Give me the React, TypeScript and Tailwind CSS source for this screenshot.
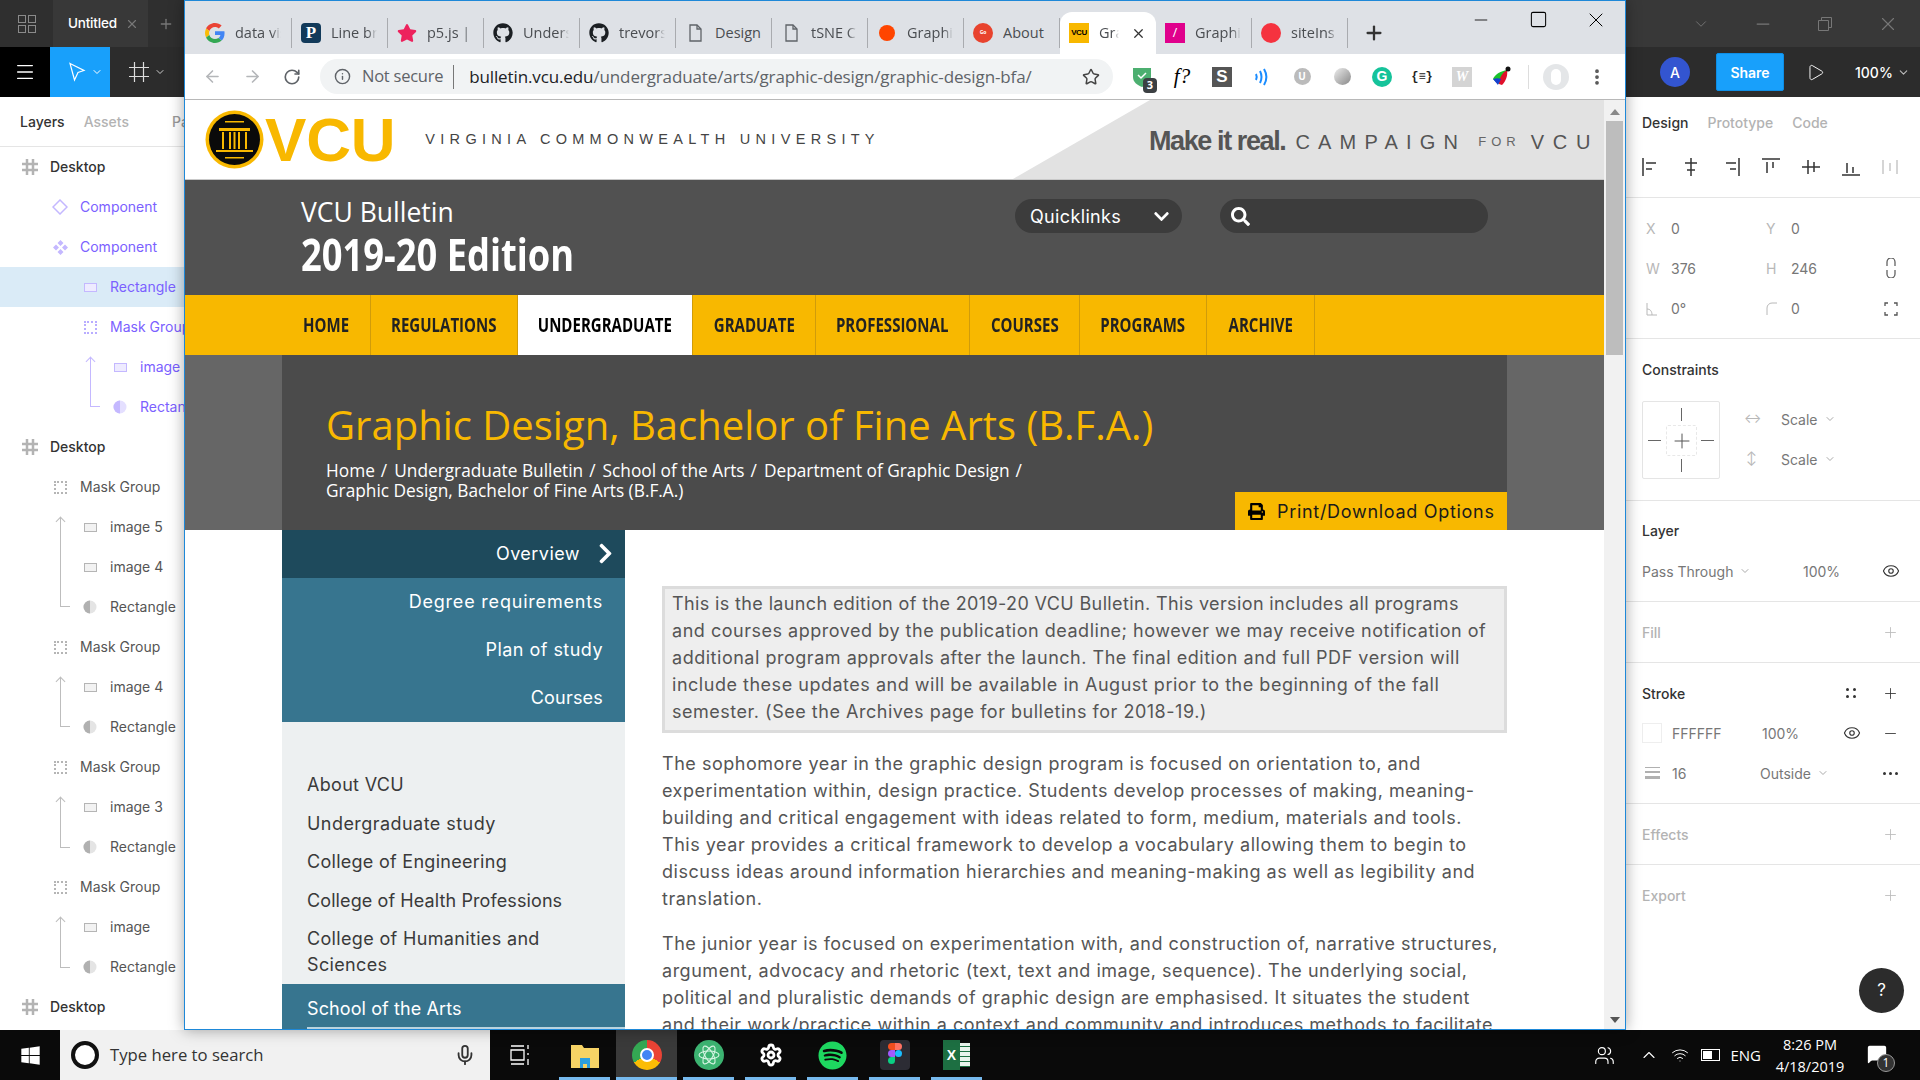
import { FaGithub, FaPrint, FaSearch, FaChevronDown, FaChevronRight, FaSpotify, FaWindows, FaStar } from "react-icons/fa";
import { ArrowLeft, ArrowRight, RotateCw, Info, Star, MoreVertical, Plus, X, Minus, Square, ChevronDown, Play, Menu, Mic, Eye, Settings, Wifi, ChevronUp, Users, MessageSquare } from "lucide-react";

const ui = "font-['Inter',sans-serif]";
const site = "font-['Inter',sans-serif]";
const open = "font-['Open_Sans',sans-serif]";

function GoogleG() {
  return (
    <svg width="20" height="20" viewBox="0 0 48 48">
      <path fill="#EA4335" d="M24 9.5c3.5 0 6.700 1.300 9.100 3.500l6.800-6.800C35.800 2.400 30.300 0 24 0 14.600 0 6.500 5.400 2.600 13.200l7.900 6.200C12.400 13.600 17.700 9.500 24 9.500z" />
      <path fill="#4285F4" d="M46.900 24.500c0-1.600-.1-3.100-.4-4.500H24v9h12.900c-.6 3-2.200 5.500-4.700 7.200l7.700 6c4.500-4.200 7-10.300 7-17.700z" />
      <path fill="#FBBC05" d="M10.500 28.600c-.5-1.400-.8-3-.8-4.600s.3-3.200.8-4.600l-7.900-6.200C.9 16.500 0 20.100 0 24s.9 7.500 2.600 10.800l7.900-6.200z" />
      <path fill="#34A853" d="M24 48c6.500 0 11.900-2.100 15.900-5.800l-7.700-6c-2.200 1.400-4.900 2.300-8.200 2.300-6.300 0-11.600-4.200-13.500-9.900l-7.900 6.200C6.500 42.600 14.600 48 24 48z" />
    </svg>
  );
}

function PageIcon() {
  return (
    <svg width="20" height="20" viewBox="0 0 20 20" fill="none" stroke="#5f6368" strokeWidth="1.300">
      <path d="M5 2h7l4 4v12H5z" />
      <path d="M12 2v4h4" />
    </svg>
  );
}

function Dot({ color }: { color: string }) {
  return <span className={color + " block h-4 w-4 rounded-full"} />;
}

const tabs = [
  { t: "data vis", i: <GoogleG /> },
  { t: "Line br", i: <span className="flex h-5 w-5 items-center justify-center rounded-sm bg-[#123a5a] font-['Liberation_Serif',serif] text-[17px] font-bold text-white">P</span> },
  { t: "p5.js | I", i: <FaStar className="text-[20px] text-[#ed225d]" /> },
  { t: "Unders", i: <FaGithub className="text-[20px] text-[#1b1f23]" /> },
  { t: "trevors", i: <FaGithub className="text-[20px] text-[#1b1f23]" /> },
  { t: "Design", i: <PageIcon />, solid: true },
  { t: "tSNE C", i: <PageIcon /> },
  { t: "Graphi", i: <Dot color="bg-[#ff4500]" /> },
  { t: "About", i: <span className="flex h-5 w-5 items-center justify-center rounded-full bg-[#e8432e] text-[5px] font-bold text-white">Go</span>, solid: true },
  { t: "Gra", i: <span className="flex h-5 w-5 items-center justify-center bg-[#f8b800] font-['Liberation_Sans',sans-serif] text-[8px] font-bold tracking-tighter text-black">VCU</span>, active: true },
  { t: "Graphi", i: <span className="flex h-5 w-5 items-center justify-center bg-[#e0008c] text-[12px] text-white">/</span> },
  { t: "siteIns", i: <span className="block h-5 w-5 rounded-full bg-[#f5333f]" /> },
];

function BrowserTab({ t, i, active, solid }: { t: string; i: React.ReactNode; active?: boolean; solid?: boolean }) {
  return (
    <div className={"relative flex h-[42px] w-[96px] shrink-0 items-center gap-[10px] px-[9px] " + (active ? "rounded-t-xl bg-white" : "")}>
      <span className="flex h-5 w-5 shrink-0 items-center justify-center">{i}</span>
      <span className={open + " overflow-hidden whitespace-nowrap text-[14.500px] text-[#4a4d51] " + (active ? "w-[20px] [mask-image:linear-gradient(to_right,black_70%,transparent)]" : solid ? "w-[48px]" : "w-[46px] [mask-image:linear-gradient(to_right,black_80%,transparent)]")}>{t}</span>
      {active && <X size={15} strokeWidth={2} className="ml-[2px] shrink-0 text-[#333]" />}
      {!active && <span className="absolute right-0 top-[6px] h-[30px] w-[1px] bg-[#a9abaf]" />}
    </div>
  );
}

function Ext({ children }: { children: React.ReactNode }) {
  return <span className="relative flex h-full w-10 shrink-0 items-center justify-center">{children}</span>;
}

function ChromeBar() {
  return (
    <>
      <div className="flex h-[53px] shrink-0 items-start bg-[#dee1e6] pl-[11px] pt-[11px]">
        {tabs.map((b, n) => (
          <BrowserTab key={n} t={b.t} i={b.i} active={b.active} solid={b.solid} />
        ))}
        <Plus size={22} strokeWidth={2.5} className="ml-[15px] mt-[10px] text-[#333]" />
        <Minus size={20} strokeWidth={1} className="ml-[86px] mt-[-2px] text-black" />
        <Square size={19} strokeWidth={1.300} className="ml-[38px] mt-[-2px] text-black" />
        <X size={24} strokeWidth={1} className="ml-[36px] mt-[-4px] text-black" />
      </div>
      <div className="flex h-[46px] shrink-0 items-center border-b border-[#b8b8b8] bg-white pl-[7px]">
        <span className="flex w-10 justify-center"><ArrowLeft size={19} className="text-[#b4b6b9]" /></span>
        <span className="flex w-10 justify-center"><ArrowRight size={19} className="text-[#b4b6b9]" /></span>
        <span className="flex w-10 justify-center"><RotateCw size={18} strokeWidth={2.2} className="text-[#5f6368]" /></span>
        <div className="ml-[8px] flex h-[35px] w-[793px] items-center rounded-full bg-[#f1f3f4] pl-[14px]">
          <Info size={17} className="text-[#5f6368]" />
          <span className={open + " ml-[11px] whitespace-nowrap text-[16.500px] text-[#5f6368] tracking-[-0.25px]"}>Not secure</span>
          <span className="ml-[10px] mr-[15px] h-[24px] w-[1px] bg-[#777]" />
          <span className={open + " whitespace-nowrap text-[17px] tracking-[-0.12px] text-[#5f6368]"}><span className="text-[#202124]">bulletin.vcu.edu</span>/undergraduate/arts/graphic-design/graphic-design-bfa/</span>
          <Star size={18} className="ml-auto mr-[13px] text-[#444]" />
        </div>
        <div className="ml-[9px] flex h-full items-center">
          <Ext>
            <svg width="22" height="24" viewBox="0 0 22 24"><path d="M2 3h18v9c0 5-4 8-9 10C6 20 2 17 2 12z" fill="#4caf70" /><path d="M7 10l3 3 5-5" stroke="#fff" strokeWidth="1.500" fill="none" /></svg>
            <span className={open + " absolute bottom-[6px] right-[5px] flex h-[15px] w-[14px] items-center justify-center rounded-sm bg-[#3c4043] text-[11px] font-bold text-white"}>3</span>
          </Ext>
          <Ext><span className="font-['Liberation_Serif',serif] text-[21px] italic text-black">f?</span></Ext>
          <Ext><span className="flex h-5 w-5 items-center justify-center bg-[#555] font-['Liberation_Sans',sans-serif] text-[17px] font-bold text-white">S</span></Ext>
          <Ext>
            <svg width="20" height="20" viewBox="0 0 20 20" fill="none" stroke="#1a8cff" strokeWidth="2"><path d="M4 7c1 2 1 4 0 6" /><path d="M8 4c2 4 2 8 0 12" /><path d="M12 2c3 5 3 11 0 16" /></svg>
          </Ext>
          <Ext><span className="flex h-[17px] w-[17px] items-center justify-center rounded-full bg-[#bbb] text-[10px] font-bold text-white">U</span></Ext>
          <Ext><span className="block h-[17px] w-[17px] rounded-full bg-gradient-to-br from-[#eee] to-[#888]" /></Ext>
          <Ext><span className="flex h-5 w-5 items-center justify-center rounded-full bg-[#15c39a] font-['Liberation_Sans',sans-serif] text-[14px] font-bold text-white">G</span></Ext>
          <Ext><span className="font-['Liberation_Mono',monospace] text-[12px] font-bold text-[#222]">{"{≡}"}</span></Ext>
          <Ext><span className="flex h-5 w-5 items-center justify-center bg-[#d4d4d4] font-['Liberation_Serif',serif] text-[14px] font-bold italic text-white">W</span></Ext>
          <Ext>
            <svg width="20" height="24" viewBox="0 0 20 24"><path d="M1 14C3 9 9 6 15 5c-1 6-3 11-9 14z" fill="#19c22c" /><path d="M7 19c0-6 3-11 8-14 1 5-1 11-5 15z" fill="#e0102a" /><path d="M1 14c3-1 6-1 8 0-1 3-3 5-3 6z" fill="#1840d0" /><circle cx="16" cy="4" r="2.500" fill="#111" /></svg>
          </Ext>
          <span className="ml-[6px] h-[24px] w-[1px] bg-[#ddd]" />
          <span className="ml-[14px] flex h-[26px] w-[26px] items-center justify-center rounded-full bg-[#e4e6e8]"><span className="h-[16px] w-[10px] rounded-full bg-white" /></span>
          <MoreVertical size={20} strokeWidth={2.5} className="ml-[18px] text-[#555]" />
        </div>
      </div>
    </>
  );
}

function VcuSeal() {
  return (
    <svg width="59" height="59" viewBox="0 0 59 59">
      <circle cx="29.500" cy="29.500" r="29" fill="#f8b800" />
      <circle cx="29.500" cy="29.500" r="25.500" fill="#0a0a0a" />
      <path d="M14 18h31v3H14z M11 40h37v2H11z" fill="#f8b800" />
      <path d="M17 22h2v17h-2z M24 22h2v17h-2z M28.500 22h2v17h-2z M33 22h2v17h-2z M40 22h2v17h-2z" fill="#f8b800" />
      <path d="M20 11h19v1.500H20z M20 47h19v1.500H20z" fill="#f8b800" />
    </svg>
  );
}

const nav = [
  { t: "REGULATIONS", w: "w-[147px]" },
  { t: "UNDERGRADUATE", w: "w-[175px]", active: true },
  { t: "GRADUATE", w: "w-[123px]" },
  { t: "PROFESSIONAL", w: "w-[154px]" },
  { t: "COURSES", w: "w-[110px]" },
  { t: "PROGRAMS", w: "w-[127px]" },
  { t: "ARCHIVE", w: "w-[108px]" },
];

const boxLines = [
  "This is the launch edition of the 2019-20 VCU Bulletin. This version includes all programs",
  "and courses approved by the publication deadline; however we may receive notification of",
  "additional program approvals after the launch. The final edition and full PDF version will",
  "include these updates and will be available in August prior to the beginning of the fall",
  "semester. (See the Archives page for bulletins for 2018-19.)",
];
const para1 = [
  "The sophomore year in the graphic design program is focused on orientation to, and",
  "experimentation within, design practice. Students develop processes of making, meaning-",
  "building and critical engagement with ideas related to form, medium, materials and tools.",
  "This year provides a critical framework to develop a vocabulary allowing them to begin to",
  "discuss ideas around information hierarchies and meaning-making as well as legibility and",
  "translation.",
];
const para2 = [
  "The junior year is focused on experimentation with, and construction of, narrative structures,",
  "argument, advocacy and rhetoric (text, text and image, sequence). The underlying social,",
  "political and pluralistic demands of graphic design are emphasised. It situates the student",
  "and their work/practice within a context and community and introduces methods to facilitate",
];

function Lines({ lines, tightFirst }: { lines: string[]; tightFirst?: boolean }) {
  return (
    <>
      {lines.map((l, i) => (
        <span key={i} className={"block whitespace-nowrap " + (tightFirst && i === 0 ? "tracking-[0.37px]" : "")}>{l}</span>
      ))}
    </>
  );
}

function VcuPage() {
  return (
    <div className="flex min-h-0 flex-1">
      <div className="w-[1419px] shrink-0 overflow-hidden">
        <header className="relative flex h-[80px] items-center border-b border-[#c9c9c9] bg-white pl-[20px]">
          <VcuSeal />
          <span className="ml-[1px] font-['Liberation_Sans',sans-serif] text-[62px] font-bold leading-none tracking-[-0.2px] text-[#f8b800]">VCU</span>
          <span className="ml-[30px] whitespace-nowrap font-['Liberation_Sans',sans-serif] text-[14.500px] tracking-[5.300px] text-[#444]">VIRGINIA COMMONWEALTH UNIVERSITY</span>
          <div className="absolute right-0 top-0 flex h-full w-[591px] items-center bg-[#e2e2e2] pl-[136px] pt-[4px] [clip-path:polygon(137px_0,100%_0,100%_100%,0_100%)]">
            <span className="whitespace-nowrap font-['Liberation_Sans',sans-serif] text-[27px] font-bold tracking-[-1.400px] text-[#555]">Make it real.</span>
            <span className="ml-[10px] whitespace-nowrap font-['Liberation_Sans',sans-serif] text-[20px] tracking-[8.200px] text-[#555]">CAMPAIGN</span>
            <span className="ml-[12px] whitespace-nowrap font-['Liberation_Sans',sans-serif] text-[13px] tracking-[5px] text-[#666]">FOR</span>
            <span className="ml-[10px] whitespace-nowrap font-['Liberation_Sans',sans-serif] text-[20px] tracking-[8.800px] text-[#555]">VCU</span>
          </div>
        </header>
        <div className="flex h-[115px] bg-[#515151] pl-[116px]">
          <div className={open + " w-[714px] shrink-0 pt-[13px] text-white"}>
            <div className="text-[26.500px] leading-[38px]">VCU Bulletin</div>
            <div className="origin-left scale-x-[0.825] whitespace-nowrap text-[44px] font-bold leading-[46px]">2019-20 Edition</div>
          </div>
          <div className={site + " mt-[19px] flex h-[34px] w-[167px] shrink-0 items-center justify-between rounded-full bg-[#3c3c3c] pl-[15px] pr-[12px] text-[18px] tracking-[0.35px] text-white"}>
            Quicklinks
            <FaChevronDown className="text-[17px]" />
          </div>
          <div className="ml-[38px] mt-[19px] flex h-[34px] w-[268px] shrink-0 items-center rounded-full bg-[#3c3c3c] pl-[11px]">
            <FaSearch className="text-[19px] text-white" />
          </div>
        </div>
        <nav className={open + " flex h-[60px] bg-[#f8b800] text-[#222]"}>
          <div className="flex w-[186px] shrink-0 items-center justify-end border-r border-[#d09c0a] pr-[15px]">
            <span className="scale-x-[0.79] text-[19px] font-bold">HOME</span>
          </div>
          {nav.map((n) => (
            <div key={n.t} className={n.w + " flex shrink-0 items-center justify-center border-r border-[#d09c0a] " + (n.active ? "bg-white text-black" : "")}>
              <span className="scale-x-[0.79] whitespace-nowrap text-[19px] font-bold">{n.t}</span>
            </div>
          ))}
        </nav>
        <div className="flex h-[175px] bg-[#666]">
          <div className="relative ml-[97px] w-[1225px] shrink-0 bg-[#4b4b4b] pl-[44px] pt-[40px]">
            <h1 className={open + " whitespace-nowrap text-[40px] leading-[60px] text-[#f8b800]"}>Graphic Design, Bachelor of Fine Arts (B.F.A.)</h1>
            <div className={open + " mt-[6px] text-[17.300px] leading-[20px] text-white"}>
              <div className="flex gap-[6px] whitespace-nowrap">
                <span>Home</span><span>/</span><span className="ml-[1px]">Undergraduate Bulletin</span><span>/</span><span className="ml-[1px]">School of the Arts</span><span>/</span><span className="ml-[1px]">Department of Graphic Design</span><span>/</span>
              </div>
              <div className="whitespace-nowrap">Graphic Design, Bachelor of Fine Arts (B.F.A.)</div>
            </div>
            <div className={site + " absolute bottom-0 right-0 flex h-[38px] w-[272px] items-center bg-[#f8b800] pl-[13px] text-[18px] tracking-[0.7px] text-[#1b1b1b]"}>
              <FaPrint className="mr-[12px] text-[17px] text-black" />
              Print/Download Options
            </div>
          </div>
        </div>
        <div className="flex bg-white pl-[97px]">
          <aside className={site + " w-[343px] shrink-0"}>
            <div className="flex h-[48px] items-center justify-end bg-[#1e4a5c] pb-[1px] pr-[8px] text-[18px] tracking-[0.45px] text-white">
              Overview
              <FaChevronRight className="ml-[14px] text-[23px]" />
            </div>
            <div className="bg-[#37758f] pr-[22px] text-right text-[18px] leading-[48px] text-white">
              <div className="tracking-[0.8px]">Degree requirements</div>
              <div className="tracking-[0.47px]">Plan of study</div>
              <div className="tracking-[0.2px]">Courses</div>
            </div>
            <div className="bg-[#edf0f1] pl-[25px] pt-[50px] text-[18px] text-[#3a3a3a]">
              <div className="h-[39px] leading-[26px] tracking-[0.3px]">About VCU</div>
              <div className="h-[38px] leading-[26px] tracking-[0.45px]">Undergraduate study</div>
              <div className="h-[39px] leading-[26px] tracking-[0.28px]">College of Engineering</div>
              <div className="h-[38px] leading-[26px] tracking-[0.1px]">College of Health Professions</div>
              <div className="h-[58px] leading-[26px] tracking-[0.34px]">College of Humanities and<br />Sciences</div>
            </div>
            <div className="h-[50px] bg-[#37758f] pl-[25px] text-[18px] leading-[50px] tracking-[0.1px] text-white">
              <div className="h-[45px] border-b-2 border-[#b9d3df]">School of the Arts</div>
            </div>
          </aside>
          <main className={site + " ml-[37px] w-[845px] shrink-0 pt-[56px] text-[18px] leading-[27px] tracking-[0.52px] text-[#555]"}>
            <div className="border-[3px] border-[#dcdcdc] bg-[#eeeeee] px-[7px] pb-[5px] pt-[1px]">
              <Lines lines={boxLines} tightFirst />
            </div>
            <p className="mt-[17px]"><Lines lines={para1} /></p>
            <p className="mt-[18px]"><Lines lines={para2} /></p>
          </main>
        </div>
      </div>
      <div className="flex w-[21px] shrink-0 flex-col items-center bg-[#f1f1f1]">
        <span className="mt-[9px] h-0 w-0 border-x-[5px] border-b-[6px] border-x-transparent border-b-[#888]" />
        <span className="mt-[6px] h-[234px] w-[17px] bg-[#bdbdbd]" />
        <span className="mt-auto mb-[6px] h-0 w-0 border-x-[5px] border-t-[6px] border-x-transparent border-t-[#555]" />
      </div>
    </div>
  );
}

function FrameIcon() {
  return (
    <svg width="18" height="18" viewBox="0 0 18 18" fill="none" stroke="#b3b3b3" strokeWidth="2.500">
      <path d="M6 1v16M12 1v16M1 6h16M1 12h16" />
    </svg>
  );
}
function RectIcon({ purple }: { purple?: boolean }) {
  return <span className={"block h-[9px] w-[13px] border " + (purple ? "border-[#c4b8ff] bg-[#eeebff]" : "border-[#b5b5b5] bg-[#f2f2f2]")} />;
}
function MaskIcon({ purple }: { purple?: boolean }) {
  return <span className={"block h-[13px] w-[13px] border-2 border-dotted " + (purple ? "border-[#b9adff]" : "border-[#b5b5b5]")} />;
}
function HalfIcon({ purple }: { purple?: boolean }) {
  return (
    <svg width="14" height="14" viewBox="0 0 14 14">
      <circle cx="7" cy="7" r="6.500" fill={purple ? "#e4dfff" : "#e4e4e4"} />
      <path d="M7 .5a6.500 6.500 0 0 0 0 13z" fill={purple ? "#c4b8ff" : "#b0b0b0"} />
    </svg>
  );
}
function DiamondIcon({ fill }: { fill?: boolean }) {
  return fill ? (
    <svg width="15" height="15" viewBox="0 0 15 15" fill="#c4b8ff">
      <path d="M7.500 0l3 3-3 3-3-3zM3 4.500l3 3-3 3-3-3zM12 4.500l3 3-3 3-3-3zM7.500 9l3 3-3 3-3-3z" />
    </svg>
  ) : (
    <svg width="16" height="16" viewBox="0 0 16 16" fill="none" stroke="#c4b8ff" strokeWidth="1.500">
      <path d="M8 1l7 7-7 7-7-7z" />
    </svg>
  );
}

type Row = { t: string; d: number; k: "frame" | "comp" | "compf" | "rect" | "mask" | "half"; p?: boolean; sel?: boolean };
const layers: Row[] = [
  { t: "Desktop", d: 0, k: "frame" },
  { t: "Component", d: 1, k: "comp", p: true },
  { t: "Component", d: 1, k: "compf", p: true },
  { t: "Rectangle", d: 2, k: "rect", p: true, sel: true },
  { t: "Mask Group", d: 2, k: "mask", p: true },
  { t: "image", d: 3, k: "rect", p: true },
  { t: "Rectangle", d: 3, k: "half", p: true },
  { t: "Desktop", d: 0, k: "frame" },
  { t: "Mask Group", d: 1, k: "mask" },
  { t: "image 5", d: 2, k: "rect" },
  { t: "image 4", d: 2, k: "rect" },
  { t: "Rectangle", d: 2, k: "half" },
  { t: "Mask Group", d: 1, k: "mask" },
  { t: "image 4", d: 2, k: "rect" },
  { t: "Rectangle", d: 2, k: "half" },
  { t: "Mask Group", d: 1, k: "mask" },
  { t: "image 3", d: 2, k: "rect" },
  { t: "Rectangle", d: 2, k: "half" },
  { t: "Mask Group", d: 1, k: "mask" },
  { t: "image", d: 2, k: "rect" },
  { t: "Rectangle", d: 2, k: "half" },
  { t: "Desktop", d: 0, k: "frame" },
];
const indent = ["pl-[20px]", "pl-[50px]", "pl-[80px]", "pl-[110px]"];

function LayerIcon({ r }: { r: Row }) {
  if (r.k === "frame") return <FrameIcon />;
  if (r.k === "comp") return <DiamondIcon />;
  if (r.k === "compf") return <DiamondIcon fill />;
  if (r.k === "rect") return <RectIcon purple={r.p} />;
  if (r.k === "mask") return <MaskIcon purple={r.p} />;
  return <HalfIcon purple={r.p} />;
}

function Tree({ top, h, left, purple }: { top: string; h: string; left: string; purple?: boolean }) {
  const c = purple ? "border-[#c4b8ff]" : "border-[#bdbdbd]";
  return (
    <span className={top + " " + h + " " + left + " " + c + " absolute w-[10px] border-b border-l"}>
      <span className={c + " absolute -left-[4px] top-0 h-[7px] w-[7px] rotate-45 border-l border-t"} />
    </span>
  );
}

function LeftPanel() {
  return (
    <aside className={ui + " flex w-[184px] shrink-0 flex-col overflow-hidden"}>
      <div className="flex h-[47px] shrink-0 bg-[#383838]">
        <div className="flex w-[53px] items-center justify-center bg-[#2f2f2f]">
          <div className="grid grid-cols-2 gap-[2px]">
            <span className="h-[8px] w-[8px] border border-[#8a8a8a]" />
            <span className="h-[8px] w-[8px] border border-[#8a8a8a]" />
            <span className="h-[8px] w-[8px] border border-[#8a8a8a]" />
            <span className="h-[8px] w-[8px] border border-[#8a8a8a]" />
          </div>
        </div>
        <div className="flex w-[95px] items-center bg-[#383838] pl-[15px] text-[13.500px] font-medium tracking-[-0.2px] text-white">
          Untitled
          <X size={14} className="ml-[8px] text-[#777]" />
        </div>
        <div className="flex flex-1 items-center justify-center bg-[#2f2f2f] text-[#777]"><Plus size={16} /></div>
      </div>
      <div className="flex h-[50px] shrink-0 bg-[#2c2c2c] text-white">
        <div className="flex w-[50px] items-center justify-center bg-black"><Menu size={22} strokeWidth={1.500} /></div>
        <div className="flex w-[60px] items-center gap-[5px] bg-[#18a0fb] pl-[18px]">
          <svg width="18" height="20" viewBox="0 0 18 20" fill="none" stroke="#fff" strokeWidth="1.200"><path d="M2 1.500l14 7-6 2-3.500 7.500z" /></svg>
          <ChevronDown size={12} />
        </div>
        <div className="flex flex-1 items-center justify-center gap-[5px]">
          <svg width="20" height="20" viewBox="0 0 20 20" fill="none" stroke="#ddd" strokeWidth="1.200"><path d="M5.500 0v20M14.500 0v20M0 5.500h20M0 14.500h20" /></svg>
          <ChevronDown size={12} className="text-[#ccc]" />
        </div>
      </div>
      <div className="flex h-[50px] shrink-0 items-center gap-[19px] whitespace-nowrap border-b border-[#e5e5e5] bg-white pl-[20px] text-[14px] font-medium text-[#999]">
        <span className="text-[#333]">Layers</span>
        <span className="text-[#b3b3b3]">Assets</span>
        <span className="ml-[24px]">Page</span>
      </div>
      <div className="relative flex-1 overflow-hidden bg-white text-[14px]">
        {layers.map((r, i) => (
          <div key={i} className={indent[r.d] + " flex h-[40px] items-center whitespace-nowrap " + (r.sel ? "bg-[#daebf7] " : "") + (r.p ? "text-[#7b61ff]" : r.d === 0 ? "font-medium text-[#333]" : "text-[#555]")}>
            <span className="flex w-[20px] shrink-0 items-center justify-center"><LayerIcon r={r} /></span>
            <span className="relative -top-px ml-[10px]">{r.t}</span>
          </div>
        ))}
        <Tree top="top-[211px]" h="h-[49px]" left="left-[90px]" purple />
        <Tree top="top-[371px]" h="h-[89px]" left="left-[60px]" />
        <Tree top="top-[531px]" h="h-[49px]" left="left-[60px]" />
        <Tree top="top-[651px]" h="h-[50px]" left="left-[60px]" />
        <Tree top="top-[771px]" h="h-[50px]" left="left-[60px]" />
      </div>
    </aside>
  );
}

function AlignIcon({ d, faded }: { d: string; faded?: boolean }) {
  return (
    <svg width="20" height="20" viewBox="0 0 20 20" fill="none" stroke={faded ? "#c8c8c8" : "#333"} strokeWidth="1.500">
      <path d={d} />
    </svg>
  );
}
const aligns = [
  "M2 1v18M5 6h10M5 12h6",
  "M10 1v18M4 6h12M6 13h8",
  "M18 1v18M5 6h10M9 12h6",
  "M1 2h18M6 5v11M12 5v6",
  "M1 10h18M7 3v14M13 5v10",
  "M1 18h18M6 6v10M12 10v6",
  "M2 3v14M9 6v8M16 3v14",
];

function PlusBtn({ faded }: { faded?: boolean }) {
  return <Plus size={17} strokeWidth={1.200} className={faded ? "ml-auto mr-[21px] text-[#bbb]" : "ml-auto mr-[21px] text-[#333]"} />;
}

function Field({ label, value, w }: { label: React.ReactNode; value: string; w: string }) {
  return (
    <div className={w + " flex items-center"}>
      <span className="flex w-[20px] text-[#b8b8b8]">{label}</span>
      <span className="ml-[5px]">{value}</span>
    </div>
  );
}

function EyeIcon() {
  return <Eye size={18} strokeWidth={1.500} className="text-[#333]" />;
}

function RightPanel() {
  return (
    <aside className={ui + " relative flex flex-1 flex-col text-[14px] text-[#777]"}>
      <div className="flex h-[47px] shrink-0 items-center bg-[#383838] text-[#777]">
        <ChevronDown size={18} strokeWidth={1.200} className="ml-[66px]" />
        <Minus size={20} strokeWidth={1.500} className="ml-[43px]" />
        <svg width="16" height="16" viewBox="0 0 16 16" fill="none" stroke="currentColor" className="ml-[44px]"><path d="M1.500 4.500h10v10h-10z" /><path d="M4.500 4V1.500h10v10H12" /></svg>
        <X size={22} strokeWidth={1.200} className="ml-[44px]" />
      </div>
      <div className="flex h-[50px] shrink-0 items-center bg-[#2c2c2c] text-white">
        <span className="ml-[34px] flex h-[30px] w-[30px] items-center justify-center rounded-full bg-[#3355d0] text-[14px] font-medium">A</span>
        <span className="ml-[26px] flex h-[38px] w-[68px] items-center justify-center rounded-[2px] border border-[#0d8ee6] bg-[#18a0fb] text-[14px] font-semibold">Share</span>
        <Play size={19} strokeWidth={1.200} className="ml-[22px]" />
        <span className="ml-[30px] text-[14px] font-medium">100%</span>
        <ChevronDown size={13} className="ml-[4px] text-[#bbb]" />
      </div>
      <div className="flex h-[50px] shrink-0 items-center gap-[19px] pl-[16px] font-medium text-[#b3b3b3]">
        <span className="text-[#333]">Design</span>
        <span>Prototype</span>
        <span>Code</span>
      </div>
      <div className="flex h-[51px] shrink-0 items-center gap-[20px] border-b border-[#e5e5e5] pl-[15px] pb-[10px]">
        {aligns.map((d, i) => (
          <AlignIcon key={i} d={d} faded={i === 6} />
        ))}
      </div>
      <div className="h-[141px] shrink-0 border-b border-[#e5e5e5] pl-[20px] pt-[10px]">
        <div className="flex h-[40px] items-center"><Field label="X" value="0" w="w-[120px]" /><Field label="Y" value="0" w="w-[100px]" /></div>
        <div className="flex h-[40px] items-center">
          <Field label="W" value="376" w="w-[120px]" /><Field label="H" value="246" w="w-[100px]" />
          <svg width="12" height="20" viewBox="0 0 12 20" fill="none" stroke="#555" strokeWidth="1.200" className="ml-auto mr-[23px]"><path d="M2 8V4a4 4 0 0 1 8 0v4M2 12v4a4 4 0 0 0 8 0v-4" /></svg>
        </div>
        <div className="flex h-[41px] items-center">
          <Field label={<svg width="12" height="14" viewBox="0 0 12 14" fill="none" stroke="#b8b8b8"><path d="M1 1v12h10M1 7c3 0 5 2 5 6" /></svg>} value="0°" w="w-[120px]" />
          <Field label={<svg width="12" height="14" viewBox="0 0 12 14" fill="none" stroke="#b8b8b8"><path d="M1 13V6a5 5 0 0 1 5-5h5" /></svg>} value="0" w="w-[100px]" />
          <svg width="14" height="14" viewBox="0 0 14 14" fill="none" stroke="#555" strokeWidth="1.300" className="ml-auto mr-[22px]"><path d="M1 4V1h3M10 1h3v3M13 10v3h-3M4 13H1v-3" /></svg>
        </div>
      </div>
      <div className="h-[162px] shrink-0 border-b border-[#e5e5e5] pl-[16px] pt-[22px]">
        <div className="text-[14px] font-medium leading-[18px] text-[#333]">Constraints</div>
        <div className="mt-[22px] flex">
          <div className="relative h-[78px] w-[78px] rounded-[2px] border border-[#e5e5e5]">
            <span className="absolute left-[38px] top-[6px] h-[13px] w-[1px] bg-[#666]" />
            <span className="absolute left-[38px] bottom-[6px] h-[13px] w-[1px] bg-[#666]" />
            <span className="absolute left-[5px] top-[38px] h-[1px] w-[13px] bg-[#666]" />
            <span className="absolute right-[5px] top-[38px] h-[1px] w-[13px] bg-[#666]" />
            <span className="absolute left-[23px] top-[23px] flex h-[31px] w-[31px] items-center justify-center rounded-[2px] border border-dashed border-[#e8e8e8]"><Plus size={24} strokeWidth={1} className="text-[#555]" /></span>
          </div>
          <div className="-mt-[2px] ml-[24px] flex flex-col">
            <div className="flex h-[40px] items-center">
              <span className="w-[37px] text-[13px] text-[#b8b8b8]">↔</span>Scale<ChevronDown size={12} className="ml-[6px] text-[#aaa]" />
            </div>
            <div className="flex h-[40px] items-center">
              <span className="w-[37px] pl-[2px] text-[13px] text-[#b8b8b8]">↕</span>Scale<ChevronDown size={12} className="ml-[6px] text-[#aaa]" />
            </div>
          </div>
        </div>
      </div>
      <div className="h-[101px] shrink-0 border-b border-[#e5e5e5] pl-[16px] pt-[21px]">
        <div className="font-medium leading-[18px] text-[#333]">Layer</div>
        <div className="mt-[11px] flex h-[40px] items-center">
          <span className="flex w-[161px] items-center">Pass Through<ChevronDown size={12} className="ml-[6px] text-[#aaa]" /></span>
          <span className="w-[79px]">100%</span>
          <EyeIcon />
        </div>
      </div>
      <div className="flex h-[61px] shrink-0 items-center border-b border-[#e5e5e5] pl-[16px] font-medium text-[#b3b3b3]">
        Fill<PlusBtn faded />
      </div>
      <div className="h-[141px] shrink-0 border-b border-[#e5e5e5] pl-[16px] pt-[10px]">
        <div className="flex h-[40px] items-center font-medium text-[#333]">
          Stroke
          <span className="ml-auto mr-[26px] grid grid-cols-2 gap-[4px]">
            <span className="h-[3px] w-[3px] rounded-full bg-[#333]" /><span className="h-[3px] w-[3px] rounded-full bg-[#333]" />
            <span className="h-[3px] w-[3px] rounded-full bg-[#333]" /><span className="h-[3px] w-[3px] rounded-full bg-[#333]" />
          </span>
          <Plus size={17} strokeWidth={1.200} className="mr-[21px]" />
        </div>
        <div className="flex h-[40px] items-center">
          <span className="h-[20px] w-[20px] border border-[#eee] bg-white" />
          <span className="ml-[10px] w-[90px]">FFFFFF</span>
          <span className="w-[81px]">100%</span>
          <EyeIcon />
          <Minus size={17} strokeWidth={1.200} className="ml-auto mr-[21px] text-[#333]" />
        </div>
        <div className="flex h-[40px] items-center">
          <span className="flex w-[20px] flex-col items-center gap-[3px] pl-[1px]"><span className="h-[1px] w-[15px] bg-[#b0b0b0]" /><span className="h-[2px] w-[15px] bg-[#b0b0b0]" /><span className="h-[3px] w-[15px] bg-[#b0b0b0]" /></span>
          <span className="ml-[10px] w-[88px]">16</span>
          Outside<ChevronDown size={12} className="ml-[6px] text-[#aaa]" />
          <span className="ml-auto mr-[22px] flex gap-[3px]"><span className="h-[3px] w-[3px] rounded-full bg-[#333]" /><span className="h-[3px] w-[3px] rounded-full bg-[#333]" /><span className="h-[3px] w-[3px] rounded-full bg-[#333]" /></span>
        </div>
      </div>
      <div className="flex h-[61px] shrink-0 items-center border-b border-[#e5e5e5] pl-[16px] font-medium text-[#b3b3b3]">
        Effects<PlusBtn faded />
      </div>
      <div className="flex h-[61px] shrink-0 items-center pl-[16px] font-medium text-[#b3b3b3]">
        Export<PlusBtn faded />
      </div>
      <span className="absolute bottom-[17px] right-[16px] flex h-[45px] w-[45px] items-center justify-center rounded-full bg-[#2c2c2c] text-[17px] text-white">?</span>
    </aside>
  );
}

function ChromeLogo() {
  return (
    <span className="block h-[30px] w-[30px] rounded-full bg-[conic-gradient(#ea4335_0_120deg,#fbbc05_120deg_240deg,#34a853_240deg_360deg)] p-[8px]">
      <span className="block h-full w-full rounded-full border-2 border-white bg-[#4285f4]" />
    </span>
  );
}

function TaskSlot({ children, active }: { children: React.ReactNode; active?: boolean }) {
  return (
    <span className={"relative flex h-full shrink-0 items-center justify-center " + (active ? "-ml-[5px] mr-[6px] w-[61px] bg-[#3a3a3a]" : "mr-[11px] w-[51px]")}>
      {children}
      <span className="absolute bottom-0 left-0 h-[3px] w-full bg-[#76b9ed]" />
    </span>
  );
}

function Taskbar() {
  return (
    <footer className={open + " flex h-[50px] shrink-0 items-center bg-[#0a0a0a] text-white"}>
      <span className="flex h-full w-[60px] shrink-0 items-center justify-center"><FaWindows className="text-[21px]" /></span>
      <div className="flex h-full w-[430px] shrink-0 items-center bg-[#f1f1f1] pl-[11px] text-[16.700px] text-[#333]">
        <span className="h-[28px] w-[28px] rounded-full border-[4px] border-[#111] bg-white" />
        <span className="ml-[11px]">Type here to search</span>
        <Mic size={22} className="ml-auto mr-[14px] text-[#333]" />
      </div>
      <span className="flex h-full w-[60px] shrink-0 items-center justify-center">
        <svg width="20" height="22" viewBox="0 0 20 22" fill="none" stroke="#fff" strokeWidth="1.300"><path d="M1 6h13v10H1zM1 2h13M1 20h13M18 1v4M18 9v2M18 15v6" /></svg>
      </span>
      <span className="ml-[9px] flex h-full shrink-0">
        <TaskSlot>
          <svg width="28" height="26" viewBox="0 0 28 26"><path d="M0 3h11l2 3h15v20H0z" fill="#f6d365" /><path d="M9 16h10v10h-3v-4h-4v4H9z" fill="#2b9fe0" /></svg>
        </TaskSlot>
        <TaskSlot active><ChromeLogo /></TaskSlot>
        <TaskSlot>
          <span className="flex h-[30px] w-[30px] items-center justify-center rounded-full bg-[#3cb371]">
            <svg width="22" height="22" viewBox="0 0 22 22" fill="none" stroke="#d8f5e4" strokeWidth="1.100"><ellipse cx="11" cy="11" rx="10" ry="4" /><ellipse cx="11" cy="11" rx="10" ry="4" transform="rotate(60 11 11)" /><ellipse cx="11" cy="11" rx="10" ry="4" transform="rotate(120 11 11)" /></svg>
          </span>
        </TaskSlot>
        <TaskSlot><Settings size={24} strokeWidth={2.8} /></TaskSlot>
        <TaskSlot><FaSpotify className="text-[29px] text-[#1ed760]" /></TaskSlot>
        <TaskSlot>
          <span className="flex h-[30px] w-[30px] items-center justify-center rounded-sm bg-[#2c2c34]">
            <svg width="14" height="24" viewBox="0 0 14 24">
              <path d="M7 0H3.500a3.500 3.500 0 0 0 0 7H7z" fill="#f24e1e" />
              <path d="M7 0h3.500a3.500 3.500 0 0 1 0 7H7z" fill="#ff7262" />
              <path d="M7 7H3.500a3.500 3.500 0 0 0 0 7H7z" fill="#a259ff" />
              <circle cx="10.500" cy="10.500" r="3.500" fill="#1abcfe" />
              <path d="M7 14H3.500a3.500 3.500 0 1 0 3.500 3.500z" fill="#0acf83" />
            </svg>
          </span>
        </TaskSlot>
        <TaskSlot>
          <span className="relative h-[30px] w-[27px]">
            <span className="absolute right-0 top-[3px] h-[24px] w-[16px] bg-[#e8f3ec] [background-image:repeating-linear-gradient(0deg,#1d6f42_0_1px,transparent_1px_5px)]" />
            <span className="absolute left-0 top-0 flex h-[30px] w-[17px] items-center justify-center bg-[#1d6f42] font-['Liberation_Sans',sans-serif] text-[14px] font-bold text-white">X</span>
          </span>
        </TaskSlot>
      </span>
      <div className="ml-auto flex h-full items-center pr-[30px]">
        <Users size={21} strokeWidth={1.300} />
        <ChevronUp size={20} strokeWidth={1.300} className="ml-[24px]" />
        <Wifi size={18} strokeWidth={1.300} className="ml-[12px]" />
        <span className="ml-[12px] flex h-[12px] w-[19px] items-center border border-white p-[1px]"><span className="h-full w-[9px] bg-white" /></span>
        <span className="ml-[10px] text-[15px]">ENG</span>
        <div className="ml-[14px] w-[70px] pt-[2px] text-center text-[14.500px] leading-[22px]">
          <div>8:26 PM</div>
          <div>4/18/2019</div>
        </div>
        <span className="relative ml-[21px] h-[24px] w-[24px]">
          <MessageSquare size={22} fill="#fff" strokeWidth={0} />
          <span className="absolute -bottom-[5px] -right-[5px] flex h-[18px] w-[18px] items-center justify-center rounded-full border border-[#999] bg-[#333] text-[12px]">1</span>
        </span>
      </div>
    </footer>
  );
}

export default function App() {
  return (
    <div className="flex h-screen w-screen flex-col overflow-hidden bg-white">
      <div className="flex h-[1030px] shrink-0">
        <LeftPanel />
        <div className="relative z-10 flex w-[1442px] shrink-0 flex-col overflow-hidden border border-[#1e88d8] bg-white shadow-[0_0_14px_rgba(0,0,0,0.35)]">
          <ChromeBar />
          <VcuPage />
        </div>
        <RightPanel />
      </div>
      <Taskbar />
    </div>
  );
}
